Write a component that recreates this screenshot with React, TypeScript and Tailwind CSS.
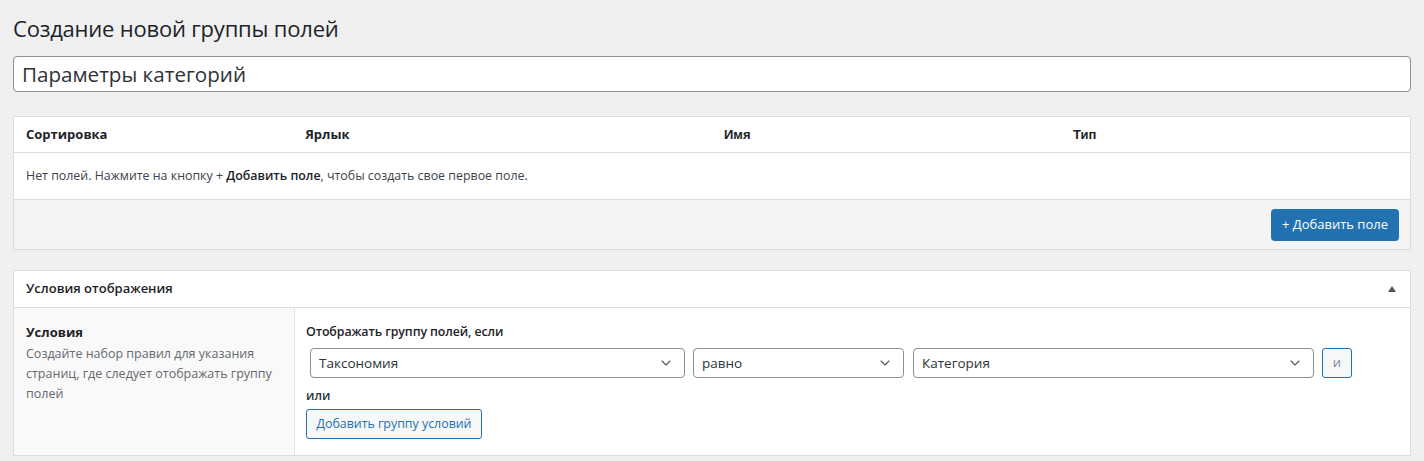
import { ChevronDown } from 'lucide-react';

const font = { fontFamily: '"Open Sans", "Noto Sans", sans-serif' };

const SelectBox = ({ value, className }: { value: string; className: string }) => (
  <div
    className={`flex h-[30px] items-center justify-between rounded-[4px] border border-[#8c8f94] bg-white pl-[8px] pr-[10px] text-[13.5px] text-[#2c3338] ${className}`}
  >
    <span>{value}</span>
    <ChevronDown size={16} strokeWidth={1.6} className="text-[#50575e]" />
  </div>
);

const App = () => {
  return (
    <div className="min-h-screen bg-[#f0f0f1] px-[13px] pt-[13px] text-[#1d2327]" style={font}>
      <h1 className="text-[22px] leading-[30px] font-normal tracking-[-0.2px] text-[#1d2327]">
        Создание новой группы полей
      </h1>

      <div className="mt-[13px] flex h-[36px] items-center rounded-[4px] border border-[#8c8f94] bg-white px-[8px] text-[20.6px] text-[#2c3338]">
        Параметры категорий
      </div>

      {/* fields table */}
      <div className="mt-[24px] border border-[#dcdcde] bg-white">
        <div className="grid h-[36px] grid-cols-[20%_30%_25%_25%] items-center border-b border-[#dcdcde] text-[13px] font-bold">
          <div className="pl-[12px]">Сортировка</div>
          <div className="pl-[12px]">Ярлык</div>
          <div className="pl-[12px]" style={{ fontFamily: '"Liberation Sans", Arial, sans-serif' }}>
            Имя
          </div>
          <div className="pl-[12px]" style={{ fontFamily: '"Liberation Sans", Arial, sans-serif' }}>
            Тип
          </div>
        </div>
        <div className="flex h-[47px] items-center border-b border-[#dcdcde] pl-[12px] text-[12.4px] text-[#3c434a]">
          Нет полей. Нажмите на кнопку +&nbsp;<span className="font-semibold text-[#1d2327]">Добавить поле</span>, чтобы
          создать свое первое поле.
        </div>
        <div className="flex h-[49px] items-center justify-end bg-[#f4f4f4] pr-[11px]">
          <button className="h-[32px] w-[128px] rounded-[4px] bg-[#2271b1] text-[13px] text-white">+ Добавить поле</button>
        </div>
      </div>

      {/* location rules */}
      <div className="mt-[20px] border border-[#dcdcde] bg-white">
        <div className="flex h-[37px] items-center justify-between border-b border-[#dcdcde] pl-[12px] pr-[13px]">
          <span className="text-[13px] font-semibold">Условия отображения</span>
          <svg width="10" height="8" viewBox="0 0 10 8">
            <path d="M5 1 L9 7 L1 7 Z" fill="#50575e" />
          </svg>
        </div>
        <div className="flex">
          <div className="w-[281px] shrink-0 border-r border-[#e5e5e5] bg-[#f9f9f9] px-[12px] pt-[14px] pb-[20px]">
            <div className="text-[13px] leading-[20px] font-bold">Условия</div>
            <p className="mt-[2px] text-[12.5px] leading-[20px] text-[#646970]">
              Создайте набор правил для указания страниц, где следует отображать группу полей
            </p>
          </div>
          <div className="flex-1 pl-[11px] pt-[14px] pb-[16px]">
            <div className="text-[12.4px] leading-[20px] font-semibold tracking-[-0.1px]">
              Отображать группу полей, если
            </div>
            <div className="mt-[6px] flex items-center pl-[4px]">
              <SelectBox value="Таксономия" className="w-[375px]" />
              <SelectBox value="равно" className="ml-[8px] w-[211px]" />
              <SelectBox value="Категория" className="ml-[9px] w-[401px]" />
              <button className="ml-[8px] h-[30px] w-[30px] rounded-[3px] border border-[#2271b1] bg-[#f6f7f7] text-[13px] text-[#7b8da6]">
                и
              </button>
            </div>
            <div className="mt-[8px] text-[12.4px] leading-[20px] font-semibold text-[#2c3338]">или</div>
            <button className="mt-[3px] h-[30px] w-[176px] rounded-[3px] border border-[#2271b1] bg-[#f6f7f7] text-[12.4px] text-[#2271b1]">
              Добавить группу условий
            </button>
          </div>
        </div>
      </div>
    </div>
  );
};

export default App;
